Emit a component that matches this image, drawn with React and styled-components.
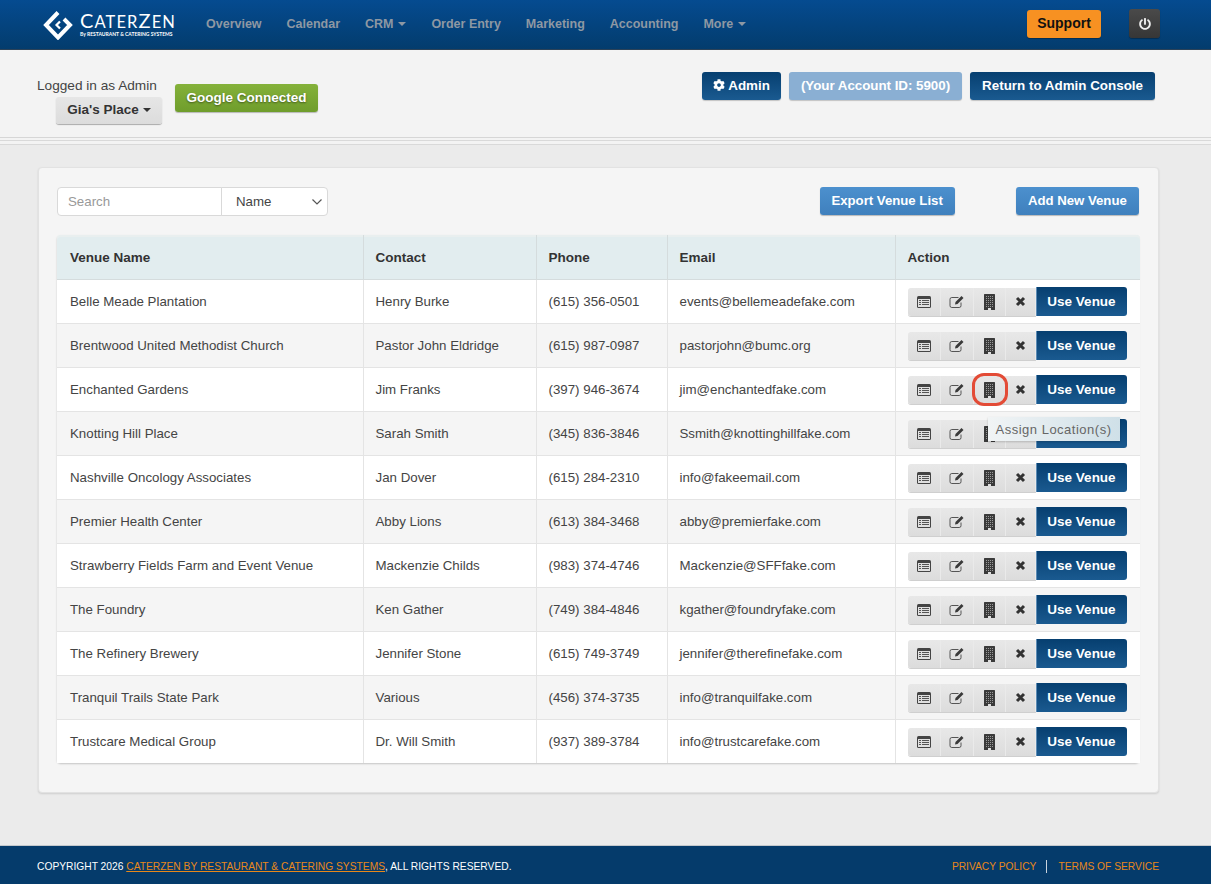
import styled, { createGlobalStyle } from "styled-components";
import { FaCog, FaPowerOff } from "react-icons/fa";

const GlobalStyle = createGlobalStyle`
  * { box-sizing: border-box; }
  html, body { margin: 0; padding: 0; }
  body {
    background: #ebebeb;
    font-family: "Liberation Sans", Arial, sans-serif;
    color: #333;
  }
`;

const venues = [
  ["Belle Meade Plantation", "Henry Burke", "(615) 356-0501", "events@bellemeadefake.com"],
  ["Brentwood United Methodist Church", "Pastor John Eldridge", "(615) 987-0987", "pastorjohn@bumc.org"],
  ["Enchanted Gardens", "Jim Franks", "(397) 946-3674", "jim@enchantedfake.com"],
  ["Knotting Hill Place", "Sarah Smith", "(345) 836-3846", "Ssmith@knottinghillfake.com"],
  ["Nashville Oncology Associates", "Jan Dover", "(615) 284-2310", "info@fakeemail.com"],
  ["Premier Health Center", "Abby Lions", "(613) 384-3468", "abby@premierfake.com"],
  ["Strawberry Fields Farm and Event Venue", "Mackenzie Childs", "(983) 374-4746", "Mackenzie@SFFfake.com"],
  ["The Foundry", "Ken Gather", "(749) 384-4846", "kgather@foundryfake.com"],
  ["The Refinery Brewery", "Jennifer Stone", "(615) 749-3749", "jennifer@therefinefake.com"],
  ["Tranquil Trails State Park", "Various", "(456) 374-3735", "info@tranquilfake.com"],
  ["Trustcare Medical Group", "Dr. Will Smith", "(937) 389-3784", "info@trustcarefake.com"],
];

const navItems = [
  { label: "Overview" },
  { label: "Calendar" },
  { label: "CRM", caret: true },
  { label: "Order Entry" },
  { label: "Marketing" },
  { label: "Accounting" },
  { label: "More", caret: true },
];

const Page = styled.div`
  width: 1211px;
  min-height: 884px;
  display: flex;
  flex-direction: column;
`;

const TopBar = styled.header`
  height: 50px;
  padding: 9px 51px 0 43px;
  display: flex;
  align-items: flex-start;
  background: linear-gradient(to bottom, #054b90, #033c6d);
  border-bottom: 1px solid #2b4258;
`;

const Logo = styled.div`
  display: flex;
  align-items: center;
  gap: 7px;
  width: 163px;
  height: 31px;
`;

const LogoWords = styled.div`
  color: #fff;
  display: flex;
  flex-direction: column;
  padding-bottom: 2px;
  font-family: "Lato", sans-serif;
`;

const LogoName = styled.div`
  font-size: 16.5px;
  font-weight: 400;
  line-height: 18px;
  letter-spacing: 1.1px;
  white-space: nowrap;
  span {
    font-size: 20px;
  }
`;

const LogoTag = styled.div`
  font-size: 5px;
  font-weight: 700;
  line-height: 6px;
  white-space: nowrap;
`;

const Nav = styled.nav`
  display: flex;
  gap: 24.95px;
  height: 29px;
  align-items: center;
`;

const NavItem = styled.span`
  color: #8e98a3;
  font-size: 12.5px;
  font-weight: 700;
  display: flex;
  align-items: center;
  gap: 5px;
  white-space: nowrap;
`;

const Caret = styled.i`
  width: 0;
  height: 0;
  border-left: 4px solid transparent;
  border-right: 4px solid transparent;
  border-top: 4px solid ${(p) => p.$color || "#8e98a3"};
`;

const TopActions = styled.div`
  margin-left: auto;
  display: flex;
  gap: 28px;
`;

const SupportButton = styled.button`
  width: 74px;
  height: 28px;
  margin-top: 1px;
  padding: 0 0 2px;
  background: #f79122;
  border: 0;
  border-radius: 3px;
  font: 700 14px "Liberation Sans", Arial, sans-serif;
  color: #111;
  box-shadow: 0 1px 1px rgba(0, 0, 0, 0.3);
`;

const PowerButton = styled.button`
  width: 31px;
  height: 29px;
  background: linear-gradient(to bottom, #4a4a4a, #363636);
  border: 0;
  border-radius: 3px;
  color: #eee;
  font-size: 12px;
  display: flex;
  align-items: center;
  justify-content: center;
  box-shadow: 0 1px 1px rgba(0, 0, 0, 0.3);
`;

const SubHeader = styled.section`
  height: 88px;
  padding: 22px 56px 0 37px;
  display: flex;
  background: #f3f3f3;
  border-bottom: 1px solid #d6d6d6;
`;

const Account = styled.div`
  width: 138px;
  padding-top: 6px;
  font-size: 13.65px;
`;

const LoggedIn = styled.div`
  line-height: 16px;
  color: #444;
  white-space: nowrap;
`;

const GreyButton = styled.button`
  display: flex;
  align-items: center;
  gap: 4px;
  margin: 3px 0 0 19px;
  width: 106px;
  height: 27px;
  justify-content: center;
  padding: 0 0 2px;
  border: 0;
  border-radius: 3px;
  background: linear-gradient(to bottom, #e6e6e6, #dcdcdc);
  box-shadow: 0 1px 1px rgba(0, 0, 0, 0.3);
  font: 700 13.5px "Liberation Sans", Arial, sans-serif;
  color: #333;
`;

const GoogleButton = styled.button`
  width: 143px;
  height: 28px;
  margin-top: 12px;
  padding: 0 0 2px;
  border: 0;
  border-radius: 3px;
  background: linear-gradient(to bottom, #84b13a, #6f9d2c);
  box-shadow: 0 1px 1px rgba(0, 0, 0, 0.25);
  color: #fff;
  font: 700 13.5px "Liberation Sans", Arial, sans-serif;
  text-shadow: 0 1px 2px rgba(0, 0, 0, 0.45);
`;

const HeaderButtons = styled.div`
  margin-left: auto;
  display: flex;
  gap: 8px;
`;

const NavyButton = styled.button`
  height: 28px;
  padding: 0 ${(p) => (p.$icon ? 11 : 12)}px 2px;
  border: 0;
  border-radius: 3px;
  display: flex;
  align-items: center;
  gap: 3px;
  background: ${(p) => (p.$muted ? "#8aafd3" : "linear-gradient(to bottom, #063f70, #1a5a90)")};
  box-shadow: 0 1px 1px rgba(0, 0, 0, 0.2);
  color: #fff;
  font: 700 13.4px "Liberation Sans", Arial, sans-serif;
  letter-spacing: ${(p) => (p.$muted ? "-0.05px" : "0")};
  white-space: nowrap;
`;

const Rules = styled.div`
  height: 8px;
  background: linear-gradient(to bottom, #f3f3f3 0, #f3f3f3 2px, #d9d9d9 2px, #d9d9d9 3px, #f3f3f3 3px, #f3f3f3 6px, #d9d9d9 6px, #d9d9d9 7px, #ebebeb 7px);
`;

const Main = styled.main`
  flex: 1;
  padding: 21px 52px 0 38px;
`;

const Card = styled.div`
  height: 626px;
  padding: 19px 19px 0 18px;
  background: #f5f5f5;
  border-radius: 4px;
  border: 1px solid #e2e2e2;
  box-shadow: 0 1px 2px rgba(0, 0, 0, 0.12);
`;

const Toolbar = styled.div`
  height: 29px;
  margin-bottom: 19px;
  display: flex;
  align-items: flex-start;
`;

const SearchInput = styled.input`
  width: 165px;
  height: 29px;
  padding: 0 10px;
  background: #fff;
  border: 1px solid #d9d9d9;
  border-radius: 4px 0 0 4px;
  font: 13.3px "Liberation Sans", Arial, sans-serif;
  &::placeholder {
    color: #999;
  }
`;

const FieldSelect = styled.div`
  width: 107px;
  height: 29px;
  margin-left: -1px;
  padding: 0 5px 0 14px;
  background: #fff;
  border: 1px solid #d9d9d9;
  border-radius: 0 4px 4px 0;
  display: flex;
  align-items: center;
  justify-content: space-between;
  font-size: 13.3px;
  color: #444;
`;

const BlueButton = styled.button`
  height: 28px;
  padding: 0 0 2px;
  width: ${(p) => p.$width}px;
  margin-left: ${(p) => p.$gap};
  border: 0;
  border-radius: 3px;
  background: linear-gradient(to bottom, #4c90ce, #3f80bd);
  box-shadow: 0 1px 1px rgba(0, 0, 0, 0.25);
  color: #fff;
  font: 700 13.2px "Liberation Sans", Arial, sans-serif;
`;

const TableWrap = styled.div`
  position: relative;
  border-radius: 4px;
  background: #fff;
  box-shadow: 0 1px 2px rgba(0, 0, 0, 0.2);
  overflow: visible;
`;

const Table = styled.table`
  width: 1083px;
  table-layout: fixed;
  border-collapse: collapse;
  font-size: 13.3px;
`;

const Th = styled.th`
  height: 44px;
  padding: 2px 12px 0;
  text-align: left;
  font-weight: 700;
  font-size: 13.5px;
  color: #333;
  background: #e2edef;
  box-shadow: inset 0 2px 0 #e9efef;
  border-bottom: 1px solid #d5dcdd;
  border-left: 1px solid #d5dcdd;
  &:first-child {
    padding-left: 13px;
    border-left: 0;
    border-top-left-radius: 4px;
  }
  &:last-child {
    border-top-right-radius: 4px;
  }
`;

const Row = styled.tr`
  background: ${(p) => (p.$odd ? "#f5f5f5" : "#fff")};
`;

const Td = styled.td`
  height: 44px;
  padding: 0 12px;
  color: #444;
  white-space: nowrap;
  border-bottom: 1px solid #e4e4e4;
  border-left: 1px solid #e4e4e4;
  &:first-child {
    padding-left: 13px;
    border-left: 0;
  }
  ${Row}:last-child & {
    border-bottom: 0;
  }
`;

const ActionGroup = styled.div`
  position: relative;
  display: flex;
  width: 219px;
  height: 29px;
`;

const IconButton = styled.button`
  width: ${(p) => p.$width || 33}px;
  height: 28px;
  margin-top: 1px;
  padding: 0;
  border: 0;
  border-right: 1px solid #eaeaea;
  background: linear-gradient(to bottom, #e8e8e8, #dcdcdc);
  box-shadow: 0 1px 0 #cfcfcf;
  color: #3a3a3a;
  display: flex;
  align-items: center;
  justify-content: center;
  &:first-child {
    border-radius: 3px 0 0 3px;
  }
`;

const UseButton = styled.button`
  flex: 1;
  padding: 0;
  border: 0;
  border-left: 1px solid #5b8bb5;
  border-radius: 0 3px 3px 0;
  background: linear-gradient(to bottom, #063f70, #1a5a90);
  color: #fff;
  font: 700 13.5px "Liberation Sans", Arial, sans-serif;
`;

const Ring = styled.span`
  position: absolute;
  left: 64px;
  top: -2px;
  width: 36px;
  height: 33px;
  border: 3px solid #e34b36;
  border-radius: 12px;
`;

const Tooltip = styled.div`
  position: absolute;
  left: 80px;
  top: 42px;
  width: 132px;
  height: 24px;
  padding-top: 1px;
  z-index: 2;
  display: flex;
  align-items: center;
  justify-content: center;
  background: linear-gradient(to right, #f1f4f5, #cfe0e8);
  box-shadow: 0 1px 2px rgba(0, 0, 0, 0.2);
  color: #666;
  font-size: 13px;
  letter-spacing: 0.5px;
  white-space: nowrap;
`;

const Footer = styled.footer`
  height: 39px;
  padding: 2px 52px 0 37px;
  display: flex;
  align-items: center;
  justify-content: space-between;
  background: #053b6b;
  border-top: 1px solid #c4c8cc;
  color: #fff;
  font-size: 10.25px;
`;

const FooterLink = styled.a`
  color: #e8881a;
  text-decoration: ${(p) => (p.$underline ? "underline" : "none")};
`;

const Legal = styled.div`
  display: flex;
  align-items: center;
  gap: 10px;
`;

const LegalDivider = styled.span`
  width: 1px;
  height: 13px;
  margin-right: 1px;
  background: #c9d4de;
`;

function LogoMark() {
  return (
    <svg width="30" height="30" viewBox="0 0 30 30" fill="none" stroke="#fff">
      <path d="M15 2.5 3 15 15 27.5 27 15 21 9" strokeWidth="4" />
      <path d="M17 11.5 13.5 15 17 18.5" strokeWidth="2.2" />
    </svg>
  );
}

function ListIcon() {
  return (
    <svg width="14" height="12" viewBox="0 0 14 12">
      <rect width="14" height="12" rx="1.5" fill="#444" />
      <rect x="1" y="3" width="12" height="8" fill="#e0e0e0" />
      <path d="M2 4h2v1H2zM5 4h7v1H5zM2 6h2v1H2zM5 6h7v1H5zM2 8h2v1H2zM5 8h7v1H5z" fill="#555" />
    </svg>
  );
}

function EditIcon() {
  return (
    <svg width="16" height="15" viewBox="0 0 16 15">
      <path d="M12 8.500v3.200a1.800 1.800 0 0 1-1.800 1.800H2.800A1.800 1.800 0 0 1 1 11.700V5.300a1.800 1.800 0 0 1 1.800-1.800h6.700" fill="none" stroke="#555" strokeWidth="1" />
      <path d="M6.500 8 12.500 2l2 2-6 6-2.500.5z" fill="#3a3a3a" />
    </svg>
  );
}

function BuildingIcon() {
  const cells = [];
  for (let y = 2; y < 13; y += 2) {
    for (let x = 2; x < 9; x += 2) {
      cells.push(<rect key={`${x}-${y}`} x={x} y={y} width="1" height="1" fill="#999" />);
    }
  }
  return (
    <svg width="11" height="16" viewBox="0 0 11 16">
      <rect width="11" height="16" rx="0.5" fill="#3a3a3a" />
      {cells}
      <rect x="4" y="14" width="3" height="2" fill="#dedede" />
    </svg>
  );
}

function CloseIcon() {
  return (
    <svg width="11" height="11" viewBox="0 0 11 11" fill="none" stroke="#333" strokeWidth="3">
      <path d="M2 2l7 7M9 2l-7 7" />
    </svg>
  );
}

function VenueActions({ highlighted }) {
  return (
    <ActionGroup>
      <IconButton><ListIcon /></IconButton>
      <IconButton><EditIcon /></IconButton>
      <IconButton $width={32}><BuildingIcon /></IconButton>
      <IconButton $width={30}><CloseIcon /></IconButton>
      <UseButton>Use Venue</UseButton>
      {highlighted && <Ring />}
      {highlighted && <Tooltip>Assign Location(s)</Tooltip>}
    </ActionGroup>
  );
}

export default function App() {
  return (
    <Page>
      <GlobalStyle />
      <TopBar>
        <Logo>
          <LogoMark />
          <LogoWords>
            <LogoName><span>C</span>ATER<span>Z</span>EN</LogoName>
            <LogoTag>By RESTAURANT &amp; CATERING SYSTEMS</LogoTag>
          </LogoWords>
        </Logo>
        <Nav>
          {navItems.map((item) => (
            <NavItem key={item.label}>
              {item.label}
              {item.caret && <Caret />}
            </NavItem>
          ))}
        </Nav>
        <TopActions>
          <SupportButton>Support</SupportButton>
          <PowerButton><FaPowerOff /></PowerButton>
        </TopActions>
      </TopBar>

      <SubHeader>
        <Account>
          <LoggedIn>Logged in as Admin</LoggedIn>
          <GreyButton>Gia's Place <Caret $color="#333" /></GreyButton>
        </Account>
        <GoogleButton>Google Connected</GoogleButton>
        <HeaderButtons>
          <NavyButton $icon><FaCog size={12} />Admin</NavyButton>
          <NavyButton $muted>(Your Account ID: 5900)</NavyButton>
          <NavyButton>Return to Admin Console</NavyButton>
        </HeaderButtons>
      </SubHeader>
      <Rules />

      <Main>
        <Card>
          <Toolbar>
            <SearchInput placeholder="Search" />
            <FieldSelect>
              Name
              <svg width="10" height="6" viewBox="0 0 10 6" fill="none" stroke="#555" strokeWidth="1.2">
                <path d="M.5.5 5 5 9.500.5" />
              </svg>
            </FieldSelect>
            <BlueButton $width={136} $gap="492px">Export Venue List</BlueButton>
            <BlueButton $width={124} $gap="61px">Add New Venue</BlueButton>
          </Toolbar>
          <TableWrap>
            <Table>
              <colgroup>
                <col width="306" />
                <col width="173" />
                <col width="131" />
                <col width="228" />
                <col width="245" />
              </colgroup>
              <thead>
                <tr>
                  <Th>Venue Name</Th>
                  <Th>Contact</Th>
                  <Th>Phone</Th>
                  <Th>Email</Th>
                  <Th>Action</Th>
                </tr>
              </thead>
              <tbody>
                {venues.map((venue, i) => (
                  <Row key={venue[0]} $odd={i % 2 === 1}>
                    {venue.map((cell) => (
                      <Td key={cell}>{cell}</Td>
                    ))}
                    <Td><VenueActions highlighted={i === 2} /></Td>
                  </Row>
                ))}
              </tbody>
            </Table>
          </TableWrap>
        </Card>
      </Main>

      <Footer>
        <div>
          COPYRIGHT 2026 <FooterLink $underline>CATERZEN BY RESTAURANT &amp; CATERING SYSTEMS</FooterLink>, ALL RIGHTS RESERVED.
        </div>
        <Legal>
          <FooterLink>PRIVACY POLICY</FooterLink>
          <LegalDivider />
          <FooterLink>TERMS OF SERVICE</FooterLink>
        </Legal>
      </Footer>
    </Page>
  );
}
